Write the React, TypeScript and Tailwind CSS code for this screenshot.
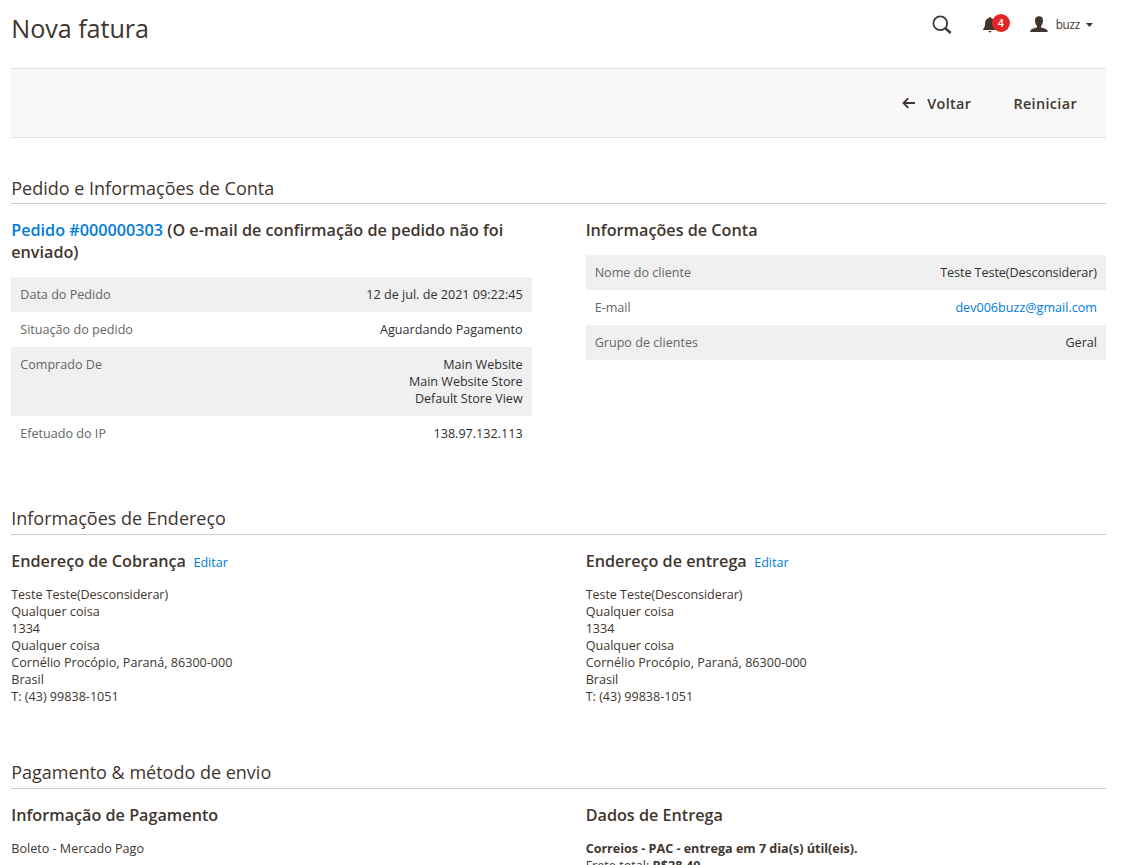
import type { ReactNode } from "react";

type Row = { label: string; value: ReactNode };

const customer = "Teste Teste(Desconsiderar)";

const address = [
  "Qualquer coisa",
  "1334",
  "Qualquer coisa",
  "Cornélio Procópio, Paraná, 86300-000",
  "Brasil",
  "T: (43) 99838-1051",
];

const orderRows: Row[] = [
  { label: "Data do Pedido", value: "12 de jul. de 2021 09:22:45" },
  { label: "Situação do pedido", value: "Aguardando Pagamento" },
  {
    label: "Comprado De",
    value: (
      <div className="tracking-[-0.02px]">
        Main Website
        <br />
        Main Website Store
        <br />
        Default Store View
      </div>
    ),
  },
  { label: "Efetuado do IP", value: "138.97.132.113" },
];

const accountRows: Row[] = [
  { label: "Nome do cliente", value: <span className="tracking-[-0.07px]">{customer}</span> },
  {
    label: "E-mail",
    value: (
      <a href="#" className="text-[#007bdb]">
        dev006buzz@gmail.com
      </a>
    ),
  },
  { label: "Grupo de clientes", value: "Geral" },
];

function InfoTable({ rows }: { rows: Row[] }) {
  return (
    <dl className="mt-3.5">
      {rows.map((row) => (
        <div key={row.label} className="flex justify-between p-[9px] odd:bg-[#f0f0f0]">
          <dt className="text-[#666]">{row.label}</dt>
          <dd className="text-right text-[#303030]">{row.value}</dd>
        </div>
      ))}
    </dl>
  );
}

function Section({ title, className, children }: { title: string; className: string; children: ReactNode }) {
  return (
    <section className={className}>
      <h2 className="h-[31px] border-b border-[#ccc] text-[18px]">{title}</h2>
      <div className="grid grid-cols-2 gap-x-[54px] pt-[15px]">{children}</div>
    </section>
  );
}

function SubTitle({ children }: { children: ReactNode }) {
  return <h3 className="text-[16.2px] leading-[22px] font-semibold">{children}</h3>;
}

function AddressBlock({ title }: { title: string }) {
  return (
    <div>
      <div className="flex items-baseline gap-[7.5px] tracking-[-0.02px]">
        <SubTitle>{title}</SubTitle>
        <a href="#" className="text-[#007bdb]">
          Editar
        </a>
      </div>
      <address className="mt-3.5 not-italic">
        <div className="tracking-[-0.07px]">{customer}</div>
        {address.map((line, i) => (
          <div key={i}>{line}</div>
        ))}
      </address>
    </div>
  );
}

export default function App() {
  return (
    <div className="h-[865px] overflow-hidden bg-white pr-[15px] pl-[11.25px] font-['Open_Sans',sans-serif] text-[12.6px] leading-[17px] text-[#41362f]">
      <header className="flex h-[68px] items-start justify-between">
        <h1 className="pt-[11px] text-[25.2px] leading-[35px] tracking-[-0.06px]">Nova fatura</h1>
        <div className="flex pt-[13px] pr-[13px]">
          <svg className="mt-[2px] mr-[30px] h-5 w-5" viewBox="0 0 20 20" fill="none" stroke="currentColor">
            <circle cx="8.3" cy="8.2" r="6.9" strokeWidth="1.8" />
            <path d="M13 12.8 L18.6 18" strokeWidth="2.4" />
          </svg>
          <div className="relative mr-[19px] h-6 w-[29px]">
            <svg className="mt-[4px] h-4 w-4" viewBox="0 0 16 16" fill="currentColor">
              <path d="M7 .9C7 .4 7.4 0 8 0s1 .4 1 .9c2.500.5 3.800 2.500 3.900 4.800.1 3.300.7 5.300 2.300 6.600v.8H1v-.8c1.500-1.300 2-3.300 2.100-6.600C3.200 3.400 4.500 1.400 7 .9zM6.400 14h3.200c-.1.900-.8 1.400-1.600 1.400S6.500 14.900 6.400 14z" />
            </svg>
            <span className="absolute top-[1px] left-[10px] flex h-[18px] w-[18px] items-center justify-center rounded-full bg-[#e22626] text-[10.8px] leading-[18px] font-semibold text-white">
              4
            </span>
          </div>
          <svg className="mt-[3px] mr-[8px] h-[17px] w-[18px]" viewBox="0 0 18 17" fill="currentColor">
            <path d="M9 .2c2.600 0 4 1.500 4 4 0 2.200-.7 4.500-2 5.900v1c.4.600 1.300.8 2.700 1.100 2.700.6 3.900 1.300 4.100 3.800H.2c.2-2.500 1.400-3.200 4.100-3.800 1.400-.3 2.300-.5 2.700-1.100v-1C5.700 8.700 5 6.400 5 4.200c0-2.500 1.400-4 4-4z" />
          </svg>
          <span className="pt-[3px] text-[11.7px] tracking-[-0.25px]">buzz</span>
          <svg className="mt-[10px] ml-[6px] h-1 w-[7px]" viewBox="0 0 7 4" fill="currentColor">
            <path d="M0 0h7L3.500 4z" />
          </svg>
        </div>
      </header>

      <div className="flex h-[70px] items-center justify-end border-y border-[#e3e3e3] bg-[#f8f8f8] pt-[2px] pr-[29px] text-[14.4px] leading-5 font-semibold tracking-[0.36px]">
        <button className="flex items-center">
          <svg className="mr-[12px] h-3 w-[13px]" viewBox="0 0 13 12" fill="none" stroke="currentColor" strokeWidth="1.8">
            <path d="M1.500 5H13M6.300 .2L1.500 5l4.800 4.800" />
          </svg>
          Voltar
        </button>
        <button className="ml-[42px]">Reiniciar</button>
      </div>

      <main>
        <Section title="Pedido e Informações de Conta" className="mt-[35px] h-[331px] [&>h2]:leading-[30px]">
          <div>
            <SubTitle>
              <a href="#" className="text-[#007bdb]">
                Pedido #000000303
              </a>{" "}
              (O e-mail de confirmação de pedido não foi enviado)
            </SubTitle>
            <InfoTable rows={orderRows} />
          </div>
          <div>
            <SubTitle>Informações de Conta</SubTitle>
            <InfoTable rows={accountRows} />
          </div>
        </Section>

        <Section title="Informações de Endereço" className="h-[254px] [&>h2]:leading-[28px]">
          <AddressBlock title="Endereço de Cobrança" />
          <AddressBlock title="Endereço de entrega" />
        </Section>

        <Section title="Pagamento &amp; método de envio" className="[&>h2]:leading-[28px]">
          <div>
            <SubTitle>Informação de Pagamento</SubTitle>
            <p className="mt-3.5">Boleto - Mercado Pago</p>
          </div>
          <div>
            <SubTitle>Dados de Entrega</SubTitle>
            <p className="mt-3.5 font-bold tracking-[-0.02px]">Correios - PAC - entrega em 7 dia(s) útil(eis).</p>
            <p>
              Frete total: <strong>R$28,40</strong>
            </p>
          </div>
        </Section>
      </main>
    </div>
  );
}
